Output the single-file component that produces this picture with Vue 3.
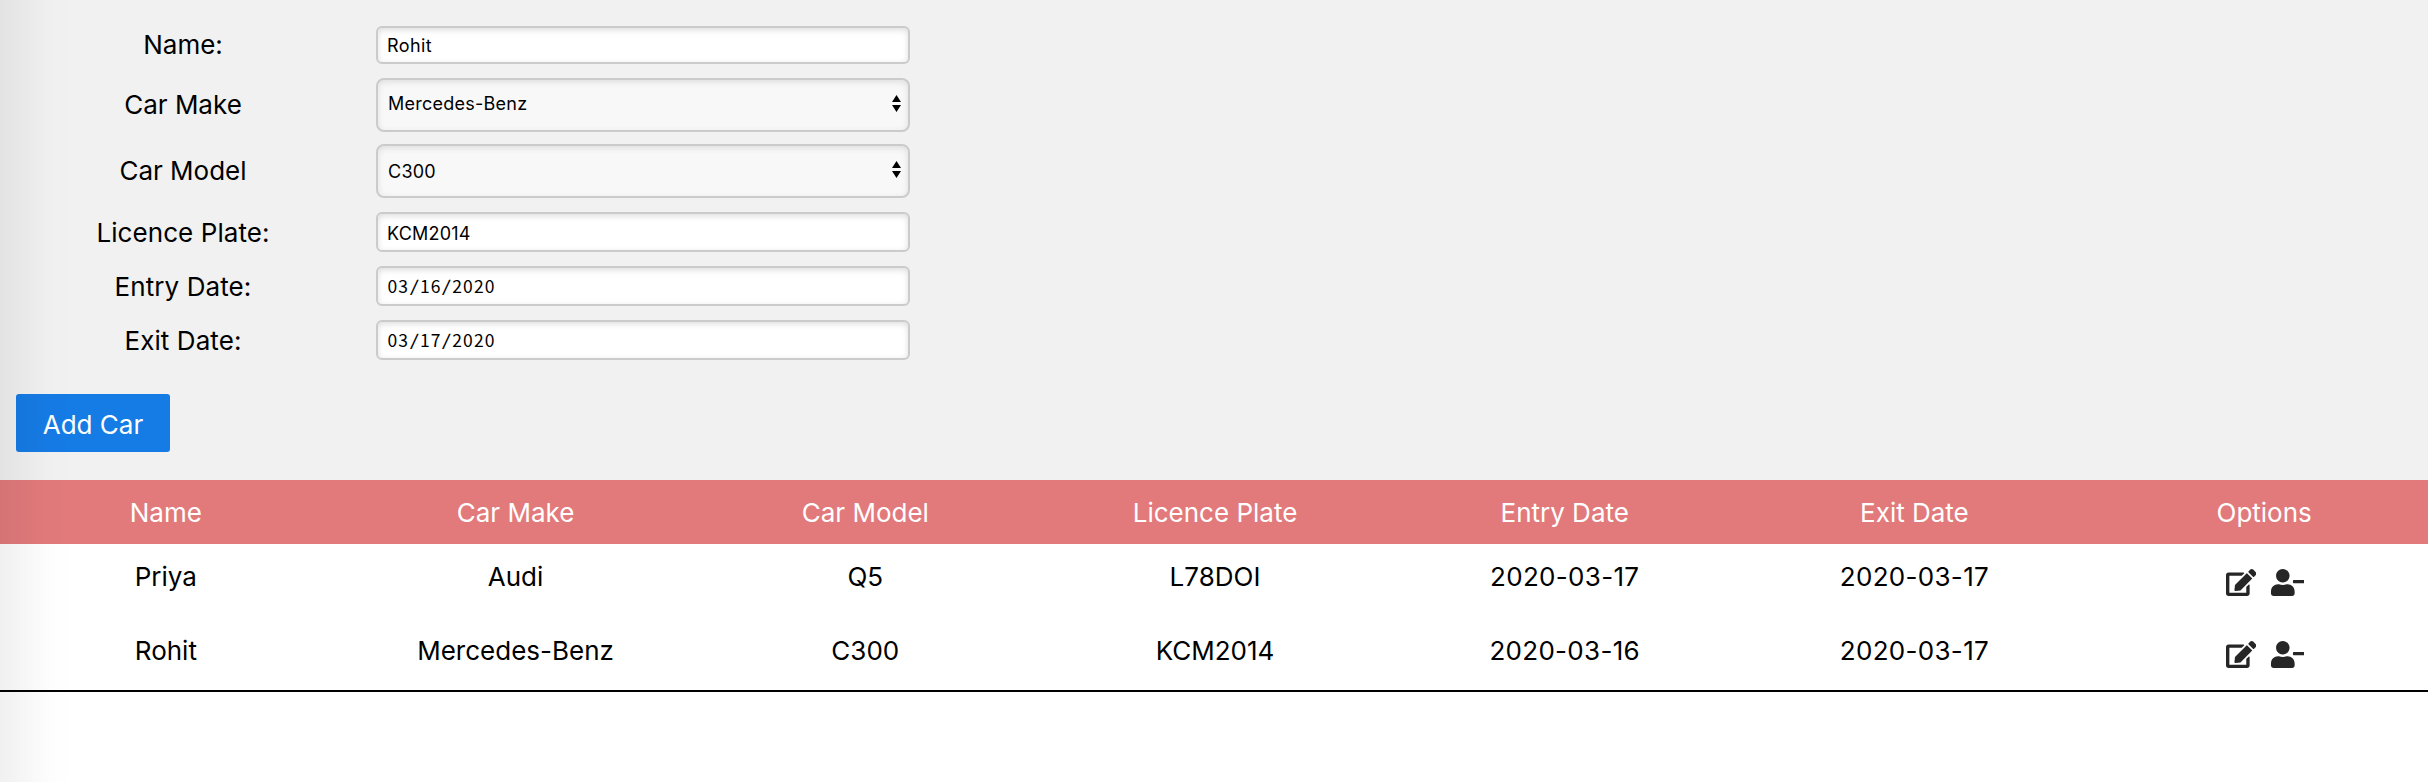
<script setup>
const fields = [
  { label: 'Name:', value: 'Rohit', kind: 'text', size: 'short' },
  { label: 'Car Make', value: 'Mercedes-Benz', kind: 'select', size: 'make' },
  { label: 'Car Model', value: 'C300', kind: 'select', size: 'model' },
  { label: 'Licence Plate:', value: 'KCM2014', kind: 'text', size: 'plate' },
  { label: 'Entry Date:', value: '03/16/2020', kind: 'date', size: 'entry' },
  { label: 'Exit Date:', value: '03/17/2020', kind: 'date', size: 'exit' },
]
const columns = ['Name', 'Car Make', 'Car Model', 'Licence Plate', 'Entry Date', 'Exit Date', 'Options']
const cars = [
  ['Priya', 'Audi', 'Q5', 'L78DOI', '2020-03-17', '2020-03-17'],
  ['Rohit', 'Mercedes-Benz', 'C300', 'KCM2014', '2020-03-16', '2020-03-17'],
]
</script>

<template>
  <div class="page">
    <section class="form">
      <div v-for="f in fields" :key="f.label" class="field" :class="f.size">
        <div class="label">{{ f.label }}</div>
        <div class="control" :class="f.kind">
          <span v-if="f.kind === 'date'" class="value"><span v-for="(c, i) in f.value.split('')" :key="i" class="ch" :class="{ slash: c === '/' }">{{ c }}</span></span>
          <span v-else class="value">{{ f.value }}</span>
          <svg v-if="f.kind === 'select'" class="arrows" viewBox="0 0 9 17">
            <path d="M4.5 0 9 7H0zM4.5 17 9 10H0z" />
          </svg>
        </div>
      </div>
      <button class="add">Add Car</button>
    </section>
    <section class="table">
      <div class="row head">
        <div v-for="c in columns" :key="c" class="cell">{{ c }}</div>
      </div>
      <div v-for="(car, r) in cars" :key="r" class="row body" :class="{ last: r === cars.length - 1 }">
        <div v-for="(v, i) in car" :key="i" class="cell" :class="{ day: i > 3 }">{{ v }}</div>
        <div class="cell options">
          <svg class="edit" viewBox="0 0 576 512"><path d="M402.6 83.2l90.2 90.2c3.8 3.8 3.8 10 0 13.8L274.4 405.6l-92.8 10.3c-12.4 1.4-22.9-9.1-21.5-21.5l10.3-92.8L388.8 83.2c3.8-3.8 10-3.8 13.8 0zm162-22.9l-48.8-48.8c-15.2-15.2-39.9-15.2-55.2 0l-35.4 35.4c-3.8 3.8-3.8 10 0 13.8l90.2 90.2c3.8 3.8 10 3.8 13.8 0l35.4-35.4c15.2-15.3 15.2-40 0-55.2zM384 346.2V448H64V128h229.8c3.2 0 6.2-1.3 8.5-3.5l40-40c7.6-7.6 2.2-20.5-8.5-20.5H48C21.5 64 0 85.5 0 112v352c0 26.5 21.5 48 48 48h352c26.5 0 48-21.5 48-48V306.2c0-10.7-12.9-16-20.5-8.5l-40 40c-2.2 2.3-3.5 5.3-3.5 8.5z" /></svg>
          <svg class="remove" viewBox="0 0 640 512"><path d="M624 208H432c-8.8 0-16 7.2-16 16v32c0 8.8 7.2 16 16 16h192c8.8 0 16-7.2 16-16v-32c0-8.8-7.2-16-16-16zm-400 48c70.7 0 128-57.3 128-128S294.7 0 224 0 96 57.3 96 128s57.3 128 128 128zm89.6 32h-16.7c-22.2 10.2-46.9 16-72.9 16s-50.6-5.8-72.9-16h-16.7C60.2 288 0 348.2 0 422.4V464c0 26.5 21.5 48 48 48h352c26.5 0 48-21.5 48-48v-41.6c0-74.2-60.2-134.4-134.4-134.4z" /></svg>
        </div>
      </div>
    </section>
    <div class="shade"></div>
  </div>
</template>

<style>
body {
  margin: 0;
  background: #fff;
}
</style>

<style scoped>
.page {
  position: relative;
  width: 2428px;
  height: 782px;
  overflow: hidden;
  background: #fff;
  font-family: Inter, "Liberation Sans", sans-serif;
  font-size: 26px;
  color: #000;
}
.form {
  box-sizing: border-box;
  height: 480px;
  padding-top: 26px;
  background: #f1f1f1;
}
.field {
  display: flex;
  align-items: center;
  height: 40px;
  margin-bottom: 14px;
}
.field.short {
  height: 38px;
}
.field.make {
  height: 54px;
  margin-bottom: 12px;
}
.field.model {
  height: 54px;
}
.label {
  width: 366px;
  margin-right: 10px;
  text-align: center;
  line-height: 32px;
}
.plate .label,
.entry .label,
.exit .label {
  padding-top: 1px;
  letter-spacing: 0.08px;
}
.control {
  box-sizing: border-box;
  display: flex;
  align-items: center;
  justify-content: space-between;
  width: 534px;
  height: 100%;
  padding: 0 7px 0 9px;
  border: 2px solid #cbcbcb;
  border-radius: 6px;
  background: #fff;
  box-shadow: inset 0 2px 6px #ddd;
  font-size: 18px;
  line-height: 22px;
}
.select {
  padding-left: 10px;
  border-radius: 8px;
  background: #f8f8f8;
}
.value {
  letter-spacing: 0.4px;
}
.short .value {
  margin-top: 2px;
}
.make .value {
  margin-bottom: 3px;
  letter-spacing: 0.25px;
}
.model .value {
  margin-top: 2px;
  letter-spacing: 0.25px;
}
.plate .value {
  margin-top: 4px;
  letter-spacing: 0.2px;
}
.date .value {
  display: flex;
  font-family: "Noto Sans CJK SC", sans-serif;
  font-size: 17.5px;
  letter-spacing: 0;
}
.ch {
  width: 10.8px;
  text-align: center;
}
.slash {
  transform: scaleX(1.35) scaleY(0.9);
}
.arrows {
  width: 9px;
  height: 17px;
  margin-bottom: 4px;
}
.add {
  display: block;
  width: 154px;
  height: 58px;
  margin: 34px 0 0 16px;
  padding: 2px 0 0;
  border: 0;
  border-radius: 3px;
  background: #157be5;
  color: #fff;
  font: inherit;
}
.table {
  width: 2448px;
  margin-left: -9px;
  border-bottom: 2px solid #000;
}
.row {
  display: grid;
  grid-template-columns: repeat(7, 1fr);
  text-align: center;
  line-height: 32px;
}
.head {
  box-sizing: border-box;
  height: 64px;
  padding-top: 17px;
  background: #e27a7b;
  color: #fff;
}
.body {
  box-sizing: border-box;
  height: 74px;
  padding-top: 17px;
}
.body.last {
  height: 72px;
}
.day {
  letter-spacing: 0.3px;
}
.options {
  display: flex;
  justify-content: center;
  gap: 14.5px;
  padding: 8px 0 0 2px;
}
.last .options {
  padding-top: 6px;
}
.options svg {
  height: 27px;
  fill: #262626;
}
.edit {
  width: 30.4px;
}
.remove {
  width: 33.75px;
}
.shade {
  position: absolute;
  top: 0;
  left: 0;
  width: 76px;
  height: 690px;
  background: linear-gradient(90deg, rgba(0, 0, 0, 0.06), rgba(0, 0, 0, 0.03) 35%, rgba(0, 0, 0, 0.008) 65%, transparent);
  box-shadow: none;
  pointer-events: none;
}
.shade {
  height: 100%;
}
</style>
